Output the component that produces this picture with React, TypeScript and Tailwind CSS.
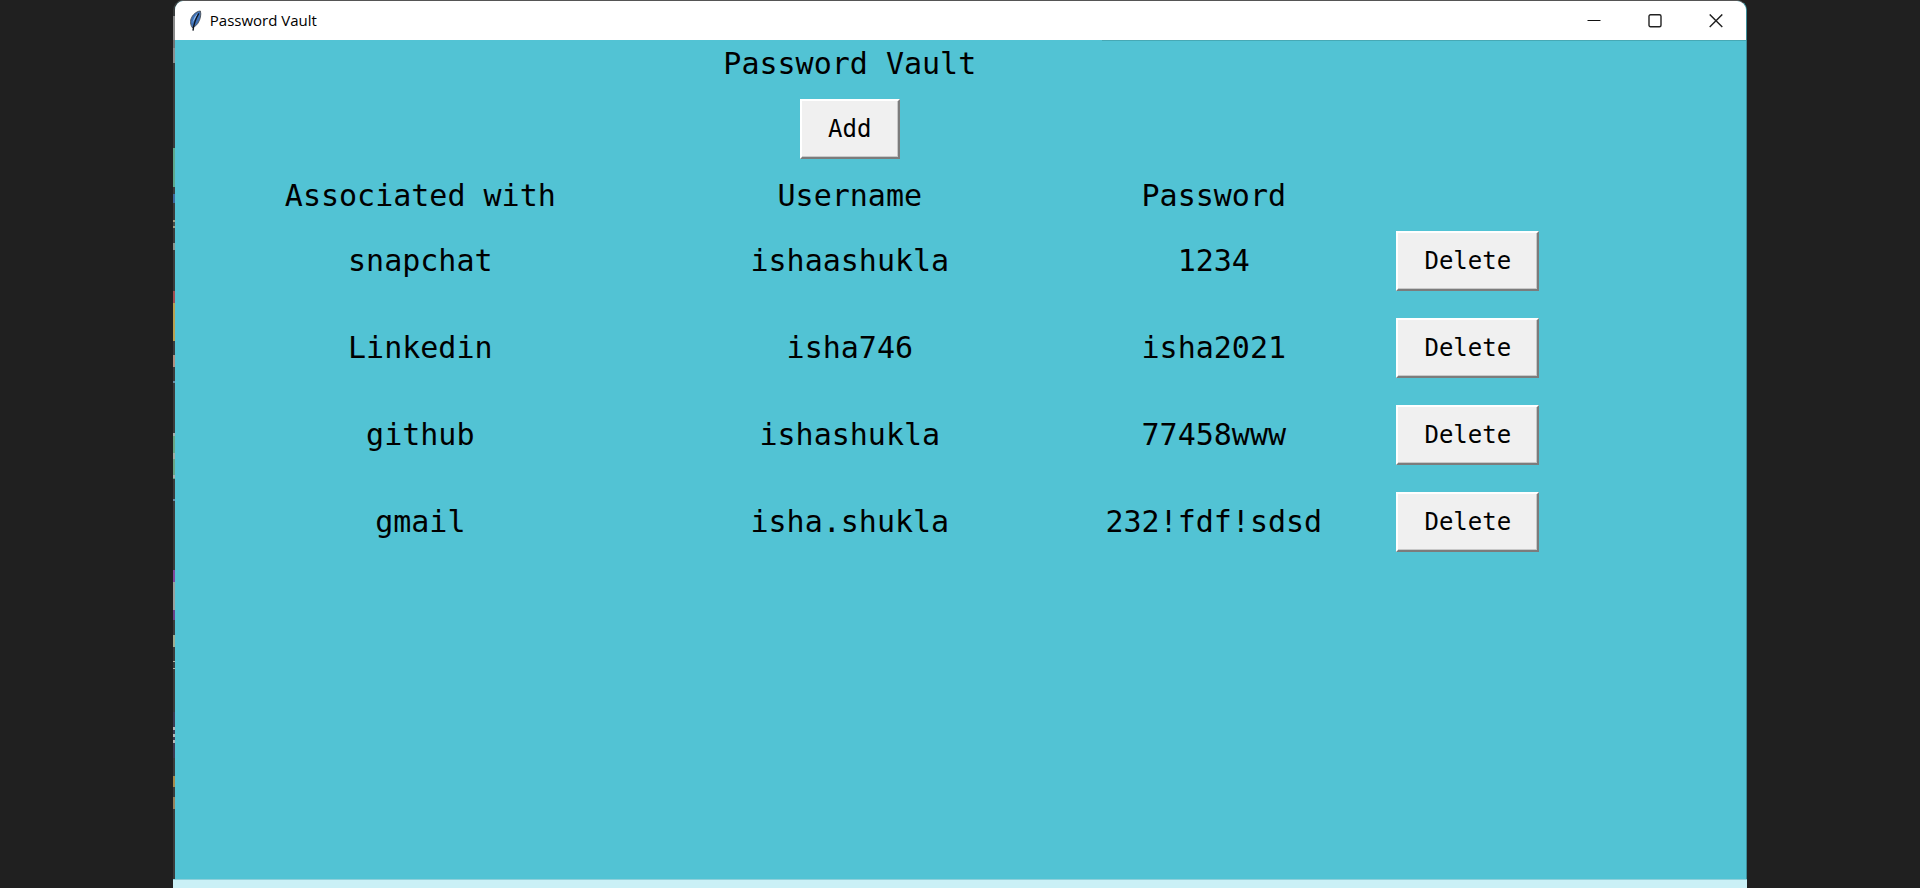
import React from "react";

type Entry = { site: string; username: string; password: string };

const entries: Entry[] = [
  { site: "snapchat", username: "ishaashukla", password: "1234" },
  { site: "Linkedin", username: "isha746", password: "isha2021" },
  { site: "github", username: "ishashukla", password: "77458www" },
  { site: "gmail", username: "isha.shukla", password: "232!fdf!sdsd" },
];

// Slivers of the desktop icons that show beside the window: [top, height, colour]
const slivers: [number, number, string][] = [
  [16, 24, "#8a8a8a"],
  [40, 8, "#707474"],
  [48, 15, "#8a8e8e"],
  [148, 39, "#5ca98c"],
  [194, 9, "#3f6a9c"],
  [220, 8, "#a09a80"],
  [222, 4, "#4a4a46"],
  [243, 7, "#8a948c"],
  [291, 12, "#a04e50"],
  [303, 38, "#b8a050"],
  [355, 12, "#b09080"],
  [381, 2, "#6a8aa0"],
  [433, 46, "#69a583"],
  [433, 3, "#a8aca8"],
  [453, 6, "#a0aca0"],
  [475, 3, "#a8aca8"],
  [499, 2, "#6a8aa0"],
  [570, 12, "#80489a"],
  [582, 28, "#98a09c"],
  [610, 10, "#6a4488"],
  [635, 12, "#a0ac90"],
  [661, 1, "#b0b0a0"],
  [668, 1, "#b0b0a0"],
  [712, 46, "#3e3c52"],
  [727, 3, "#b4b4b4"],
  [734, 3, "#b4b4b4"],
  [740, 3, "#b4b4b4"],
  [776, 11, "#a68a4c"],
  [797, 12, "#96825c"],
];

function Feather() {
  return (
    <svg viewBox="0 0 13 22" className="h-[22px] w-[13px]" aria-hidden="true">
      <path d="M3.6 18 2.2 15.6C0.8 12 1.6 8 4.4 4.8 6.6 2.4 9.3 1 11.4 1 12.4 4.6 11.4 9.6 8.8 13.4 7.4 15.4 5.6 16.6 4.2 17Z" fill="#3f72b8" stroke="#4a5058" strokeWidth="0.9" />
      <path d="M3.4 13C4 8.6 6.5 4.5 10 2.4 8.4 5.4 5.6 9 3.4 13Z" fill="#8fb8e8" />
      <path d="M9.8 3.4C7.4 7.4 5 11.4 4 20.6" fill="none" stroke="#10161f" strokeWidth="1.4" />
    </svg>
  );
}

function TkButton({ children, className = "" }: { children: React.ReactNode; className?: string }) {
  return (
    <button
      type="button"
      className={
        "h-[60px] border-2 border-t-white border-l-white border-r-[#7c7c7c] border-b-[#7c7c7c] bg-[#f0f0f0] text-center align-middle text-2xl text-black shadow-[inset_-1px_-1px_0_#c8c8c8] " +
        className
      }
    >
      {children}
    </button>
  );
}

export default function App() {
  return (
    <div className="flex min-h-screen flex-col bg-[#202020]">
      <div className="relative mx-[9%] flex flex-1 flex-col">
        <div className="flex flex-1 flex-col overflow-hidden rounded-t-[10px] border-t border-r border-l-2 border-t-[#555] border-r-[#3b8e99] border-l-[#3a3c3c] bg-[#52c3d4]">
          <header className="flex h-[39px] items-center bg-white pl-3.5 text-black">
            <Feather />
            <h1 className="ml-2 flex-1 font-['Open_Sans','Noto_Sans',sans-serif] text-[15px]">Password Vault</h1>
            <button type="button" aria-label="Minimize" className="flex h-full w-[61px] items-center justify-center">
              <svg viewBox="0 0 14 14" className="size-[14px]"><path d="M0.5 6.5H13.5" stroke="#111" fill="none" /></svg>
            </button>
            <button type="button" aria-label="Maximize" className="flex h-full w-[61px] items-center justify-center">
              <svg viewBox="0 0 14 14" className="size-[14px]"><rect x="1" y="0.8" width="12" height="12" rx="1.5" stroke="#222" strokeWidth="1.4" fill="none" /></svg>
            </button>
            <button type="button" aria-label="Close" className="flex h-full w-[61px] items-center justify-center">
              <svg viewBox="0 0 14 14" className="size-[14px]"><path d="M0.7 0.4 13.3 13M13.3 0.4 0.7 13" stroke="#222" strokeWidth="1.4" fill="none" /></svg>
            </button>
          </header>
          <div className="ml-[59%] h-px bg-[#46a9b5]" />
          <main className="flex-1 font-['DejaVu_Sans_Mono','Liberation_Mono',monospace] text-[30px] text-black">
            <div className="ml-[491px] flex w-[368px] flex-col items-center">
              <h2 className="leading-[46px]">Password Vault</h2>
              <TkButton className="mt-3 w-[100px]">Add</TkButton>
            </div>
            <table className="mt-4 table-fixed text-center">
              <colgroup>
                <col className="w-[491px]" />
                <col className="w-[368px]" />
                <col className="w-[360px]" />
                <col className="w-[148px]" />
              </colgroup>
              <thead>
                <tr className="leading-[42px]">
                  <th className="font-normal">Associated with</th>
                  <th className="font-normal">Username</th>
                  <th className="font-normal">Password</th>
                  <td />
                </tr>
              </thead>
              <tbody>
                {entries.map((e) => (
                  <tr key={e.site} className="h-[87px]">
                    <td>{e.site}</td>
                    <td>{e.username}</td>
                    <td>{e.password}</td>
                    <td className="leading-none">
                      <TkButton className="w-[143px]">Delete</TkButton>
                    </td>
                  </tr>
                ))}
              </tbody>
            </table>
          </main>
        </div>
        <div className="h-[9px] border-t border-[#8fd0da] bg-[#caf0f6]" />
        <svg className="absolute top-0 left-0 h-full w-[2px]" aria-hidden="true">
          {slivers.map(([y, h, c], i) => (
            <rect key={i} x="0" y={y} width="2" height={h} fill={c} />
          ))}
        </svg>
      </div>
    </div>
  );
}
